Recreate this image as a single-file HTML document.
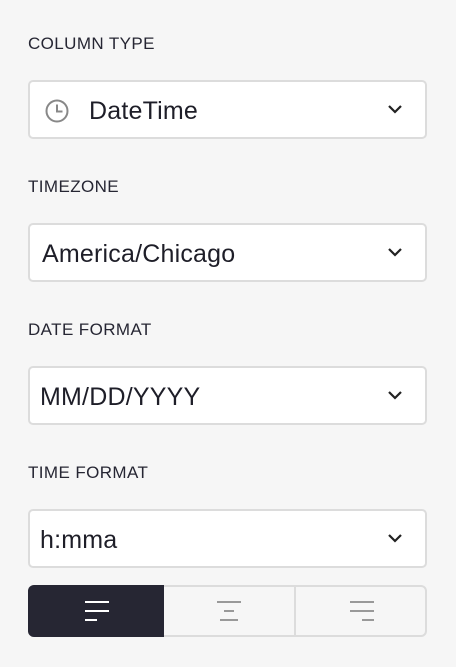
<!DOCTYPE html>
<html><head><style>
body{margin:0;background:#f6f6f6;font-family:"Liberation Sans",sans-serif;width:456px;height:667px;position:relative;overflow:hidden}
.l{position:absolute;left:28px;font-size:17px;color:#262633;letter-spacing:0.4px}
.b{position:absolute;left:28px;width:395px;height:55px;background:#fff;border:2px solid #dcdcdc;border-radius:5px}
.v{position:absolute;top:50%;transform:translateY(-45%);font-size:25px;color:#1e1e28;letter-spacing:0.2px}
.c{position:absolute;right:22px;top:21px}
.seg{position:absolute;left:28px;top:585px;width:395px;height:48px;border:2px solid #dcdcdc;border-radius:6px;background:#f6f6f6}
</style></head><body>
<div class="l" style="top:34px">COLUMN TYPE</div>
<div class="b" style="top:80px">
<svg style="position:absolute;left:14px;top:16px" width="26" height="26" viewBox="0 0 26 26"><circle cx="13" cy="13" r="10.5" fill="none" stroke="#888" stroke-width="2"/><path d="M13 6.5V13.5H18.5" fill="none" stroke="#888" stroke-width="2"/></svg>
<div class="v" style="left:59px">DateTime</div>
<svg class="c" width="16" height="12" viewBox="0 0 16 12"><path d="M2 3l6 6 6-6" fill="none" stroke="#222" stroke-width="2.2"/></svg></div>
<div class="l" style="top:177px">TIMEZONE</div>
<div class="b" style="top:223px"><div class="v" style="left:12px">America/Chicago</div>
<svg class="c" width="16" height="12" viewBox="0 0 16 12"><path d="M2 3l6 6 6-6" fill="none" stroke="#222" stroke-width="2.2"/></svg></div>
<div class="l" style="top:320px">DATE FORMAT</div>
<div class="b" style="top:366px"><div class="v" style="left:10px">MM/DD/YYYY</div>
<svg class="c" width="16" height="12" viewBox="0 0 16 12"><path d="M2 3l6 6 6-6" fill="none" stroke="#222" stroke-width="2.2"/></svg></div>
<div class="l" style="top:463px">TIME FORMAT</div>
<div class="b" style="top:509px"><div class="v" style="left:10px">h:mma</div>
<svg class="c" width="16" height="12" viewBox="0 0 16 12"><path d="M2 3l6 6 6-6" fill="none" stroke="#222" stroke-width="2.2"/></svg></div>
<div class="seg">
<div style="position:absolute;left:-2px;top:-2px;width:136px;height:52px;background:#262633;border-radius:6px 0 0 6px"></div>
<div style="position:absolute;left:264px;top:0;width:2px;height:48px;background:#dcdcdc"></div>
<svg style="position:absolute;left:0;top:0" width="395" height="48">
<g stroke="#fff" stroke-width="2"><path d="M55 15h24M55 24h24M55 33h12"/></g>
<g stroke="#999" stroke-width="2"><path d="M187 15h24M194 24h10M190 33h18"/><path d="M320 15h24M320 24h24M332 33h12"/></g>
</svg></div>
</body></html>
